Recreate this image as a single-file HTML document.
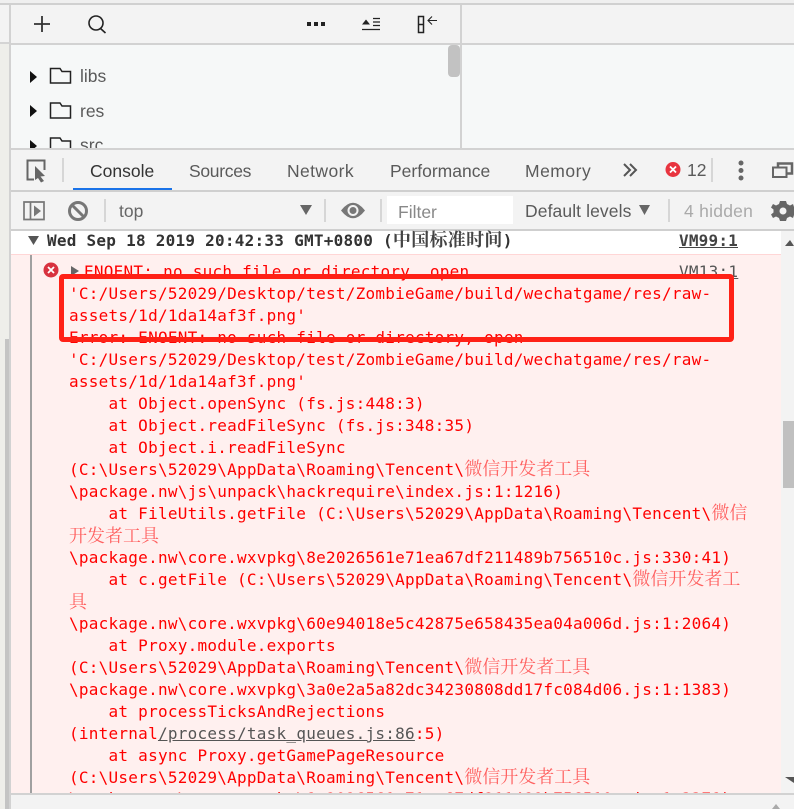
<!DOCTYPE html>
<html><head><meta charset="utf-8"><style>
html,body{margin:0;padding:0;background:#fff}
#p{position:relative;width:794px;height:809px;overflow:hidden;background:#f3f3f3;font-family:"Liberation Sans",sans-serif}
.a{position:absolute}
.t{position:absolute;font-size:17.500px;line-height:24px;color:#5a5a5a;white-space:nowrap}
.l{position:absolute;left:69px;height:22px;line-height:22px;font-family:"DejaVu Sans Mono","Noto Serif CJK SC",monospace;font-size:16px;letter-spacing:.25px;color:#f00;white-space:pre}
.l.m{left:84px}
.c{font-family:"Noto Serif CJK SC",serif;font-size:18px;letter-spacing:0;opacity:.6}
.u{color:#555;text-decoration:underline}
.f{position:absolute;left:0;top:0}
</style></head><body><div id="p">
<!-- shell -->
<div class="a" style="left:0;top:0;width:794px;height:3px;background:#efefef"></div>
<div class="a" style="left:0;top:3px;width:794px;height:2px;background:#d0d0d0"></div>
<div class="a" style="left:11px;top:44px;width:449px;height:104px;background:#f6f8f8"></div>
<div class="a" style="left:461px;top:44px;width:333px;height:104px;background:#f6f8f8"></div>
<div class="a" style="left:0;top:44px;width:10px;height:765px;background:#eeeeea"></div>
<div class="a" style="left:0;top:5px;width:10px;height:37px;background:#f3f3f3"></div>
<div class="a" style="left:0;top:42px;width:10px;height:2px;background:#d4d4d4"></div>
<div class="a" style="left:9px;top:5px;width:2px;height:804px;background:#d2d2d2"></div>
<div class="a" style="left:11px;top:43px;width:783px;height:2px;background:#d2d2d2"></div>
<div class="a" style="left:460px;top:5px;width:2px;height:143px;background:#d2d2d2"></div>
<div class="a" style="left:11px;top:148px;width:783px;height:2px;background:#d2d2d2"></div>
<div class="a" style="left:448px;top:45px;width:12px;height:32px;border-radius:4px;background:#c2c2c2"></div>
<div class="a" style="left:5px;top:339px;width:4px;height:470px;background:#c4c4c4"></div>

<!-- top toolbar icons -->
<svg class="f" width="480" height="148" fill="none" stroke="#222" stroke-width="1.6">
<path d="M34 24H50M42 16V32" stroke="#333" stroke-width="1.8"/>
<circle cx="96" cy="23" r="7"/><path d="M100.500 28.500L105.500 33"/>
<path d="M307 22h4v4h-4zM314 22h4v4h-4zM321 22h4v4h-4z" fill="#222" stroke="none"/>
<path d="M362 24.500L366 19.500L370 24.500Z" fill="#222" stroke="none"/>
<path d="M373 18.500H380M373 22H380M373 25.500H380M362 29.500H380" stroke-width="1.200"/>
<path d="M418.500 16.500H423.500V32.500H418.500ZM418.500 24.500H423.500" stroke-width="1.500"/>
<path d="M428 20.500H437M432 16.500L428 20.500L432 24.500" stroke-width="1.100"/>
<g stroke="none" fill="#111"><path d="M30 71L37 77L30 83Z"/><path d="M30 105L37 111L30 117Z"/><path d="M30 140L37 146L30 152Z"/></g>
<g stroke="#222" stroke-width="1.500">
<path d="M50.500 83V68.500H60L62 71.500H70.500V83Z"/>
<path d="M50.500 118V103H60L62 106H70.500V118Z"/>
<path d="M50.500 153V138H60L62 141H70.500V153Z"/></g>
</svg>
<div class="t" style="left:80px;top:64px">libs</div>
<div class="t" style="left:80px;top:99px">res</div>
<div class="a" style="left:80px;top:130px;width:40px;height:18px;overflow:hidden"><div class="t" style="left:0;top:3px">src</div></div>

<!-- tabs -->
<div class="t" style="left:90px;top:159px;color:#333">Console</div>
<div class="t" style="left:189px;top:159px;letter-spacing:-.3px">Sources</div>
<div class="t" style="left:287px;top:159px;letter-spacing:.4px">Network</div>
<div class="t" style="left:390px;top:159px">Performance</div>
<div class="t" style="left:525px;top:159px;letter-spacing:.5px">Memory</div>
<div class="t" style="left:687px;top:158px">12</div>
<div class="a" style="left:73px;top:188px;width:99px;height:2px;background:#1a73e8"></div>
<div class="a" style="left:11px;top:190px;width:783px;height:2px;background:#cfcfcf"></div>

<!-- toolbar -->
<div class="a" style="left:387px;top:196px;width:126px;height:28px;background:#fff"></div>
<div class="t" style="left:119px;top:199px;color:#666">top</div>
<div class="t" style="left:398px;top:200px;color:#888">Filter</div>
<div class="t" style="left:525px;top:199px;letter-spacing:.1px">Default levels</div>
<div class="t" style="left:684px;top:199px;color:#aaa;letter-spacing:.25px">4 hidden</div>
<div class="a" style="left:11px;top:229px;width:783px;height:2px;background:#cfcfcf"></div>

<svg class="f" width="794" height="232" fill="none">
<path d="M44.500 170V160.500H27.500V179.500H34" stroke="#666" stroke-width="2"/>
<path d="M35 166L45 176L40.500 176.500L44 181L41 182.500L38 178L35 180Z" fill="#666"/>
<path d="M63 158V182M105 199V222M325 199V222M381 199V222M669 199V222M712 158V182" stroke="#ccc" stroke-width="1.500"/>
<path d="M24 202H44V219.500H24ZM30.500 202V219.500" stroke="#777" stroke-width="1.700"/>
<path d="M34 205.500L41 211L34 216.500Z" fill="#777"/>
<circle cx="78" cy="211" r="8.500" stroke="#777" stroke-width="3"/><path d="M72 205L84 217" stroke="#777" stroke-width="3"/>
<path d="M300 205H312L306 215Z" fill="#666"/>
<path d="M341 210.500Q353 195 365 210.500Q353 226 341 210.500Z" fill="#777"/><circle cx="353" cy="210.500" r="5.500" fill="#f3f3f3"/><circle cx="353" cy="210.500" r="3.500" fill="#777"/>
<path d="M639 205H650L644.500 215Z" fill="#666"/>
<path d="M624 164L630 170L624 176M630 164L636 170L630 176" stroke="#555" stroke-width="2"/>
<circle cx="673" cy="169.500" r="7.500" fill="#e8343f"/><path d="M670 166.500L676 172.500M676 166.500L670 172.500" stroke="#fff" stroke-width="1.800"/>
<circle cx="741" cy="163" r="2.500" fill="#666"/><circle cx="741" cy="170.500" r="2.500" fill="#666"/><circle cx="741" cy="178" r="2.500" fill="#666"/>
<path d="M778 163.500H792V173.500H778Z" stroke="#666" stroke-width="2.500"/>
<path d="M773 167.500H786.500V177H773Z" stroke="#666" stroke-width="2" fill="#f3f3f3"/>
<path d="M782 201L786 201L787 204L790 205.500L793 204L794 207V215L793 218L790 216.500L787 218L786 221H780L779 218L776 216.500L773 218L771 214.500L773.500 212.500V209.500L771 207.500L773 204L776 205.500L779 204L780 201Z" fill="#666"/>
<circle cx="783" cy="211" r="3.500" fill="#f3f3f3"/>
</svg>

<!-- console area -->
<div class="a" style="left:11px;top:231px;width:770px;height:23px;background:#fff"></div>
<div class="a" style="left:11px;top:254px;width:770px;height:1.500px;background:#ffd6d6"></div>
<div class="a" style="left:11px;top:255px;width:770px;height:538px;background:#fff0ef"></div>
<div class="a" style="left:30px;top:255px;width:2px;height:538px;background:#a0a0a0"></div>
<div class="a" style="left:783px;top:421px;width:11px;height:67px;background:#c0c0c0"></div>

<svg class="f" width="794" height="809">
<path d="M28 236H39L33.500 245Z" fill="#555"/>
<path d="M71 266L79 271L71 276Z" fill="#666"/>
<circle cx="51" cy="270" r="7.500" fill="#d8323f"/><path d="M48 267L54 273M54 267L48 273" stroke="#fff" stroke-width="1.800"/>
<path d="M785 246L790 240L794 246Z" fill="#555"/>
<path d="M785 777H794V783Z" fill="#555"/>
</svg>

<div class="l" style="left:47px;top:228px;font-weight:bold;color:#333">Wed Sep 18 2019 20:42:33 GMT+0800 (<span class="c" style="opacity:1;font-weight:bold;color:#444;letter-spacing:.3px">中国标准时间</span>)</div>
<div class="l u" style="left:679px;top:230px;font-weight:bold;color:#444;letter-spacing:.2px">VM99:1</div>
<div class="l m" style="top:261px">ENOENT: no such file or directory, open</div>
<div class="l u" style="left:679px;top:261px">VM13:1</div>
<div class="l" style="top:283px">'C:/Users/52029/Desktop/test/ZombieGame/build/wechatgame/res/raw-</div>
<div class="l" style="top:305px">assets/1d/1da14af3f.png'</div>
<div class="l" style="top:327px">Error: ENOENT: no such file or directory, open</div>
<div class="l" style="top:349px">'C:/Users/52029/Desktop/test/ZombieGame/build/wechatgame/res/raw-</div>
<div class="l" style="top:371px">assets/1d/1da14af3f.png'</div>
<div class="l" style="top:393px">    at Object.openSync (fs.js:448:3)</div>
<div class="l" style="top:415px">    at Object.readFileSync (fs.js:348:35)</div>
<div class="l" style="top:437px">    at Object.i.readFileSync</div>
<div class="l" style="top:457px">(C:\Users\52029\AppData\Roaming\Tencent\<span class="c">微信开发者工具</span></div>
<div class="l" style="top:481px">\package.nw\js\unpack\hackrequire\index.js:1:1216)</div>
<div class="l" style="top:501px">    at FileUtils.getFile (C:\Users\52029\AppData\Roaming\Tencent\<span class="c">微信</span></div>
<div class="l" style="top:524px"><span class="c">开发者工具</span></div>
<div class="l" style="top:547px">\package.nw\core.wxvpkg\8e2026561e71ea67df211489b756510c.js:330:41)</div>
<div class="l" style="top:567px">    at c.getFile (C:\Users\52029\AppData\Roaming\Tencent\<span class="c">微信开发者工</span></div>
<div class="l" style="top:590px"><span class="c">具</span></div>
<div class="l" style="top:613px">\package.nw\core.wxvpkg\60e94018e5c42875e658435ea04a006d.js:1:2064)</div>
<div class="l" style="top:635px">    at Proxy.module.exports</div>
<div class="l" style="top:655px">(C:\Users\52029\AppData\Roaming\Tencent\<span class="c">微信开发者工具</span></div>
<div class="l" style="top:679px">\package.nw\core.wxvpkg\3a0e2a5a82dc34230808dd17fc084d06.js:1:1383)</div>
<div class="l" style="top:701px">    at processTicksAndRejections</div>
<div class="l" style="top:723px">(internal<span class="u">/process/task_queues.js:86</span>:5)</div>
<div class="l" style="top:745px">    at async Proxy.getGamePageResource</div>
<div class="l" style="top:765px">(C:\Users\52029\AppData\Roaming\Tencent\<span class="c">微信开发者工具</span></div>
<div class="a" style="left:60px;top:790px;width:700px;height:3px;overflow:hidden"><div class="l" style="left:9px;top:-2px">\package.nw\core.wxvpkg\8e2026561e71ea67df211489b756510c.js:1:3378)</div></div>

<div class="a" style="left:59px;top:274px;width:665px;height:58px;border:5px solid #ff2116;border-radius:4px"></div>

<div class="a" style="left:11px;top:793px;width:783px;height:16px;background:#f3f3f3;border-top:2px solid #d2d2d2;box-sizing:border-box"></div>
<svg class="f" width="794" height="809"><path d="M772 809L776 804L780 809Z" fill="#aaa"/></svg>
</div></body></html>
